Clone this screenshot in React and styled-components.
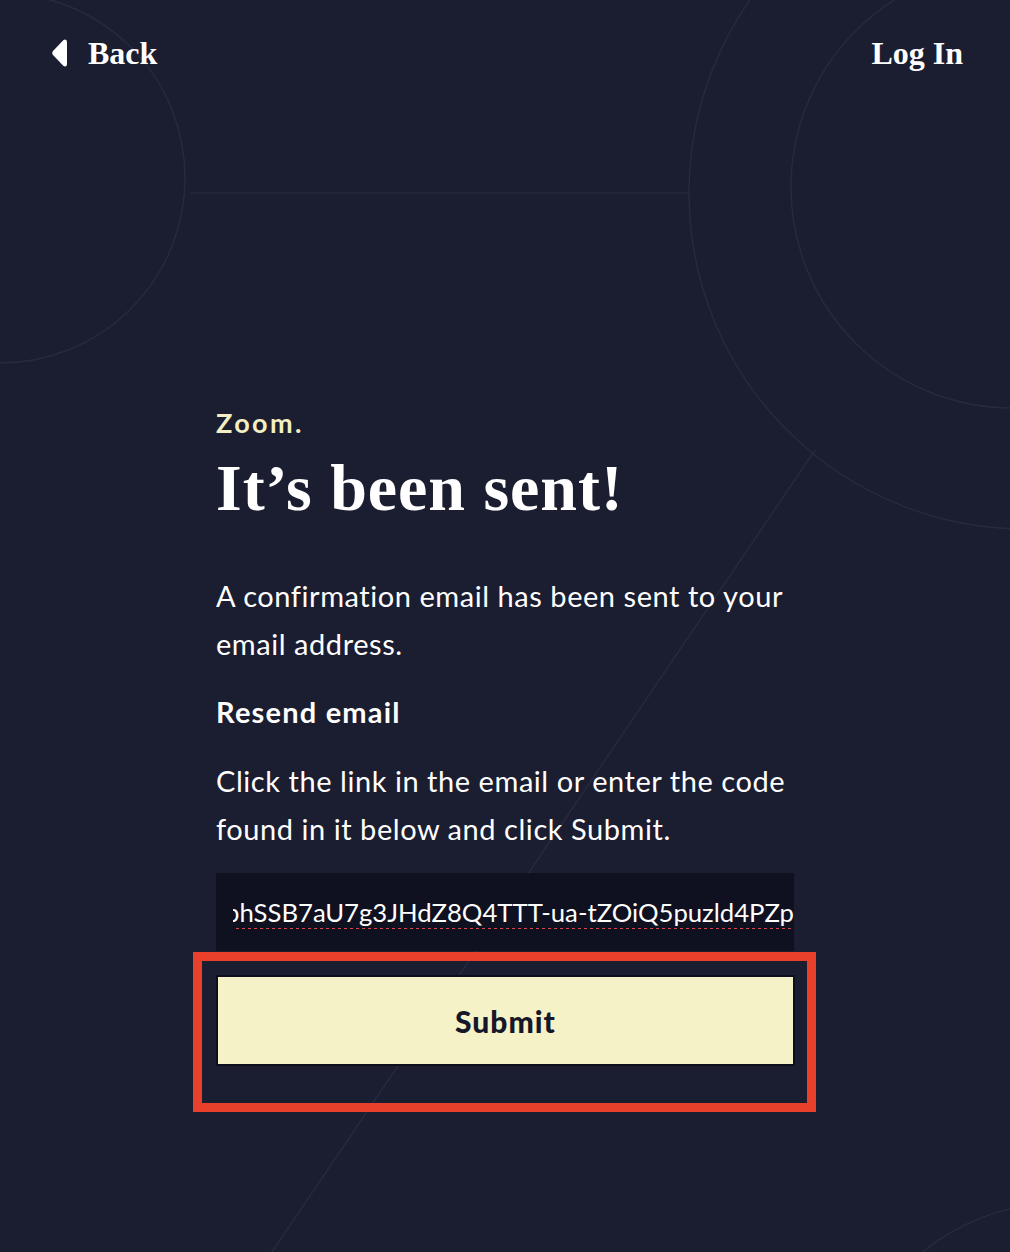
import React from "react";
import styled, { createGlobalStyle } from "styled-components";

const GlobalStyle = createGlobalStyle`
  html, body {
    margin: 0;
    padding: 0;
    background: #1b1d30;
  }
`;

const Page = styled.div`
  position: relative;
  min-height: 1252px;
  overflow: hidden;
  background: #1b1d30;
  color: #ffffff;
  font-family: Lato, "Noto Sans", sans-serif;
`;

const Decor = styled.svg`
  position: absolute;
  top: 0;
  left: 0;
  width: 1010px;
  height: 1252px;
  pointer-events: none;
  z-index: 0;
`;

const Header = styled.header`
  position: relative;
  z-index: 1;
  display: flex;
  justify-content: space-between;
  align-items: center;
  padding: 33px 47px 0 52px;
`;

const NavLink = styled.a`
  display: flex;
  align-items: center;
  gap: 21px;
  font-family: "Liberation Serif", serif;
  font-weight: 700;
  font-size: 32px;
  line-height: 40px;
  color: #ffffff;
  text-decoration: none;
  cursor: pointer;
`;

const Main = styled.main`
  position: relative;
  z-index: 1;
  width: 578px;
  margin: 334px auto 0;
  display: flex;
  flex-direction: column;
`;

const Brand = styled.div`
  font-weight: 700;
  font-size: 27px;
  line-height: 32px;
  letter-spacing: 2.4px;
  color: #f4efc2;
`;

const Title = styled.h1`
  margin: 13px 0 0;
  font-family: "Liberation Serif", serif;
  font-weight: 700;
  font-size: 66px;
  line-height: 72px;
  letter-spacing: 0.95px;
  color: #ffffff;
`;

const Text = styled.p`
  margin: ${(p) => p.$gap}px 0 0;
  font-size: 29px;
  line-height: 48px;
  letter-spacing: ${(p) => (p.$bold ? 1.2 : 0.55)}px;
  font-weight: ${(p) => (p.$bold ? 700 : 400)};
  color: #ffffff;
`;

const Field = styled.div`
  margin-top: 20px;
  height: 78px;
  display: flex;
  align-items: center;
  padding-left: 17px;
  background: #0f1020;
`;

const Clip = styled.div`
  flex: 1;
  display: flex;
  justify-content: flex-end;
  overflow: hidden;
`;

const Code = styled.span`
  white-space: nowrap;
  font-size: 25.7px;
  line-height: 34px;
  color: #ffffff;
  text-decoration: underline dotted #d9454f;
  text-decoration-thickness: 3px;
  text-underline-offset: 6px;
`;

const Highlight = styled.div`
  margin: 1px -22px 0 -23px;
  border: 9px solid #e8402a;
  padding: 14px 12px 37px 14px;
`;

const SubmitButton = styled.button`
  display: block;
  width: 100%;
  height: 91px;
  border: 2px solid #0d0f1c;
  background: #f5f2c7;
  color: #15172a;
  font-family: Lato, "Noto Sans", sans-serif;
  font-weight: 900;
  font-size: 30px;
  letter-spacing: 1px;
  cursor: pointer;
`;

function BackArrow() {
  return (
    <svg width="15" height="28" viewBox="0 0 15 28">
      <path
        d="M13 0.5 Q15 0.5 15 3 L15 25 Q15 27.5 13 27.5 L11.5 27 L1 16 Q-0.5 14 1 12 L11.5 1 Z"
        fill="#ffffff"
      />
    </svg>
  );
}

export default function App() {
  return (
    <Page>
      <GlobalStyle />
      <Decor viewBox="0 0 1010 1252">
        <g fill="none" stroke="#272a3f" strokeWidth="1.5">
          <circle cx="0" cy="178" r="185" />
          <line x1="190" y1="193" x2="689" y2="193" />
          <circle cx="1025" cy="193" r="336" />
          <circle cx="1012" cy="187" r="221" />
          <line x1="815" y1="450" x2="272" y2="1252" />
          <circle cx="1060" cy="1420" r="217" />
        </g>
      </Decor>

      <Header>
        <NavLink>
          <BackArrow />
          Back
        </NavLink>
        <NavLink>Log In</NavLink>
      </Header>

      <Main>
        <Brand>Zoom.</Brand>
        <Title>It’s been sent!</Title>
        <Text $gap={48}>
          A confirmation email has been sent to your email address.
        </Text>
        <Text $gap={20} $bold>
          Resend email
        </Text>
        <Text $gap={21}>
          Click the link in the email or enter the code found in it below and
          click Submit.
        </Text>
        <Field>
          <Clip>
            <Code>eyK2pphSSB7aU7g3JHdZ8Q4TTT-ua-tZOiQ5puzld4PZp</Code>
          </Clip>
        </Field>
        <Highlight>
          <SubmitButton>Submit</SubmitButton>
        </Highlight>
      </Main>
    </Page>
  );
}
